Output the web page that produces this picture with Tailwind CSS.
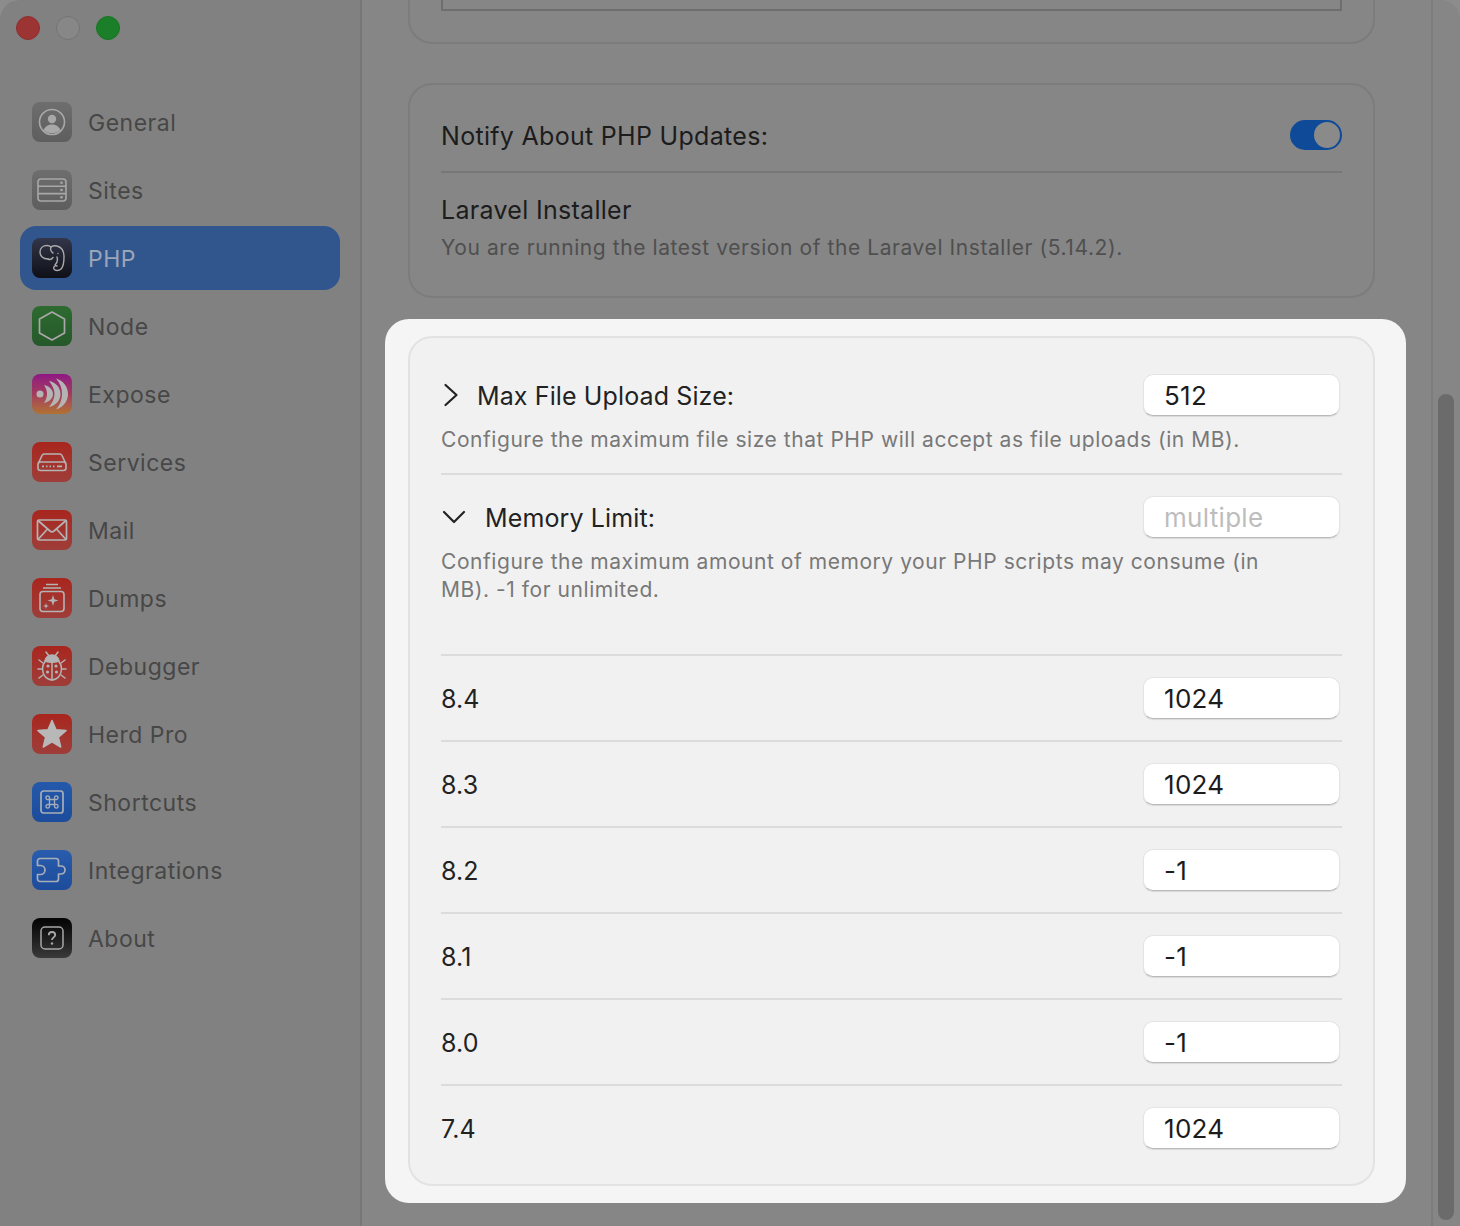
<!DOCTYPE html>
<html>
<head>
<meta charset="utf-8">
<script src="https://cdn.jsdelivr.net/npm/@tailwindcss/browser@4"></script>
</head>
<body class="m-0 bg-[#8c8c8c]">
<div class="relative w-[1460px] h-[1226px] overflow-hidden flex font-['Inter',sans-serif] bg-[#868686] rounded-tl-[20px] rounded-tr-[20px]">

    <!-- sidebar -->
    <aside class="w-[362px] h-full shrink-0 bg-[#818181] border-r-2 border-[#777777] px-5 rounded-tl-[20px]">
        <div class="flex items-center gap-[16px] h-[56px] -ml-1">
            <span class="w-6 h-6 rounded-full bg-[#9c3434] border border-[#8f3030]"></span>
            <span class="w-6 h-6 rounded-full bg-[#878787] border border-[#747474]"></span>
            <span class="w-6 h-6 rounded-full bg-[#1a7f28] border border-[#187424]"></span>
        </div>
        <nav class="mt-[34px] flex flex-col gap-1 text-[23px] tracking-[0.5px] text-[#474747]">
            <a class="h-16 flex items-center gap-4 pl-3 rounded-2xl">
                <span class="w-10 h-10 rounded-lg bg-gradient-to-b from-[#6e6e6e] to-[#5e5e5e] flex items-center justify-center">
                    <svg width="32" height="32" viewBox="0 0 32 32" fill="none" stroke="#a8a8a8" stroke-width="1.6"><circle cx="16" cy="16" r="12.5"/><circle cx="16" cy="13" r="4.2" fill="#a8a8a8" stroke="none"/><path d="M7.5 24c2-4 5-5.500 8.500-5.500s6.500 1.500 8.500 5.500a12.500 12.500 0 0 1-17 0z" fill="#a8a8a8" stroke="none"/></svg>
                </span>
                <span class="mt-[2px]">General</span>
            </a>
            <a class="h-16 flex items-center gap-4 pl-3 rounded-2xl">
                <span class="w-10 h-10 rounded-lg bg-gradient-to-b from-[#6e6e6e] to-[#5e5e5e] flex items-center justify-center">
                    <svg width="32" height="28" viewBox="0 0 32 28" fill="none" stroke="#a8a8a8" stroke-width="1.6"><rect x="2" y="3" width="28" height="22" rx="3"/><path d="M2 10.300h28M2 17.600h28"/><g fill="#a8a8a8" stroke="none"><circle cx="25.500" cy="6.700" r="1.300"/><circle cx="25.500" cy="14" r="1.300"/><circle cx="25.500" cy="21.300" r="1.300"/></g></svg>
                </span>
                <span class="mt-[2px]">Sites</span>
            </a>
            <a class="h-16 flex items-center gap-4 pl-3 rounded-2xl bg-[#31568e] text-[#9aa6b8]">
                <span class="w-10 h-10 rounded-lg bg-gradient-to-b from-[#33364a] to-[#0f1017] flex items-center justify-center">
                    <svg width="26" height="28" viewBox="0 0 26 28" fill="none" stroke="#a9a9a9" stroke-width="1.400" stroke-linecap="round" stroke-linejoin="round"><path d="M9 15C4 15 1 12 1 8 1 4 4 1.500 8 1.500c2 0 3 .5 4 1.500 2-1.500 4-1.500 6-1 4 1 7 5 7 11 0 5 0 9-3 12-2 2-6 2-7 0-1-2 1-4 3-3"/><path d="M12 3c-1 2 0 5 2 6M9 15c2 1 4 0 5-1.500M19 9.500v.1M18 13c1 3 0 6-2 8"/></svg>
                </span>
                <span class="mt-[2px]">PHP</span>
            </a>
            <a class="h-16 flex items-center gap-4 pl-3 rounded-2xl">
                <span class="w-10 h-10 rounded-lg bg-gradient-to-b from-[#2e6b30] to-[#25582a] flex items-center justify-center">
                    <svg width="30" height="32" viewBox="0 0 30 32" fill="none" stroke="#a8a8a8" stroke-width="1.700" stroke-linejoin="round"><path d="M15 2l12.500 7v14L15 30 2.500 23V9z"/></svg>
                </span>
                <span class="mt-[2px]">Node</span>
            </a>
            <a class="h-16 flex items-center gap-4 pl-3 rounded-2xl">
                <span class="w-10 h-10 rounded-lg bg-gradient-to-b from-[#8f1583] via-[#a33a5c] to-[#b0722f] flex items-center justify-center">
                    <svg width="34" height="34" viewBox="0 0 34 34" fill="#b4b4b4"><circle cx="5" cy="17" r="3.500"/><path d="M9 8C14 9 18 12.500 18 17 18 21.500 14 25 9 26 11 23 12 20 12 17 12 14 11 11 9 8z"/><path d="M14 4C20 5 25.500 10 25.500 17 25.500 24 20 29 14 30 17 26 19.500 22 19.500 17 19.500 12 17 8 14 4z"/><path d="M21 1.500C28 3.500 33 9.500 33 17 33 24.500 28 30.500 21 32.500 25 28 27 23 27 17 27 11 25 6 21 1.500z"/></svg>
                </span>
                <span class="mt-[2px]">Expose</span>
            </a>
            <a class="h-16 flex items-center gap-4 pl-3 rounded-2xl">
                <span class="w-10 h-10 rounded-lg bg-gradient-to-b from-[#a8251d] to-[#9e3d39] flex items-center justify-center">
                    <svg width="32" height="20" viewBox="0 0 32 20" fill="none" stroke="#b4b4b4" stroke-width="1.600" stroke-linejoin="round"><path d="M2.500 11L6 3.500C6.500 2.500 7.200 2 8.200 2h15.600c1 0 1.700.5 2.200 1.500L29.500 11"/><rect x="2" y="10" width="28" height="8.500" rx="2.500"/><path d="M6 14.300h2M10 14.300h1.500M13.500 14.300H15M17 14.300h1.500M21 14.300h5" stroke-width="1.800"/></svg>
                </span>
                <span class="mt-[2px]">Services</span>
            </a>
            <a class="h-16 flex items-center gap-4 pl-3 rounded-2xl">
                <span class="w-10 h-10 rounded-lg bg-gradient-to-b from-[#a8251d] to-[#9e3d39] flex items-center justify-center">
                    <svg width="32" height="24" viewBox="0 0 32 24" fill="none" stroke="#b4b4b4" stroke-width="1.700" stroke-linejoin="round"><rect x="1.500" y="2" width="29" height="20" rx="1.500"/><path d="M2 2.500l12 10.500c1.200 1 2.800 1 4 0L30 2.500M2 21.500l9.500-10.500M30 21.500L20.500 11"/></svg>
                </span>
                <span class="mt-[2px]">Mail</span>
            </a>
            <a class="h-16 flex items-center gap-4 pl-3 rounded-2xl">
                <span class="w-10 h-10 rounded-lg bg-gradient-to-b from-[#a8251d] to-[#9e3d39] flex items-center justify-center">
                    <svg width="28" height="30" viewBox="0 0 28 30" fill="none" stroke="#b4b4b4" stroke-width="1.600"><path d="M8 1.500h12M5 5h18"/><rect x="2" y="8.500" width="24" height="20" rx="3"/><path d="M15 12l1.300 4.200 4.200 1.300-4.200 1.300L15 23l-1.300-4.200-4.200-1.300 4.200-1.300z" fill="#b4b4b4" stroke="none"/><path d="M8 20l.7 2.300L11 23l-2.300.7L8 26l-.7-2.300L5 23l2.300-.7z" fill="#b4b4b4" stroke="none"/></svg>
                </span>
                <span class="mt-[2px]">Dumps</span>
            </a>
            <a class="h-16 flex items-center gap-4 pl-3 rounded-2xl">
                <span class="w-10 h-10 rounded-lg bg-gradient-to-b from-[#a8251d] to-[#9e3d39] flex items-center justify-center">
                    <svg width="32" height="34" viewBox="0 0 32 34" fill="none" stroke="#b4b4b4" stroke-width="1.500" stroke-linecap="round"><ellipse cx="16" cy="20" rx="9.500" ry="11"/><path d="M9 12c1-4 4-6 7-6s6 2 7 6c-4 1.500-10 1.500-14 0z" fill="#b4b4b4"/><path d="M16 13v18M10 3l3 4M22 3l-3 4M7 14l-4-3M25 14l4-3M6.500 20H2M25.500 20H30M7 26l-4 3M25 26l4 3"/><g fill="#b4b4b4" stroke="none"><circle cx="12" cy="17" r="1.600"/><circle cx="20" cy="17" r="1.600"/><circle cx="11.500" cy="23" r="1.600"/><circle cx="20.500" cy="23" r="1.600"/></g></svg>
                </span>
                <span class="mt-[2px]">Debugger</span>
            </a>
            <a class="h-16 flex items-center gap-4 pl-3 rounded-2xl">
                <span class="w-10 h-10 rounded-lg bg-gradient-to-b from-[#a8251d] to-[#9e3d39] flex items-center justify-center">
                    <svg width="32" height="32" viewBox="0 0 32 32" fill="#b8b8b8" stroke="#b8b8b8" stroke-width="1.500" stroke-linejoin="round"><path d="M16 2.500l4 9.200 10 .9-7.600 6.600 2.300 9.800L16 23.800l-8.700 5.200 2.300-9.800L2 12.600l10-.9z"/></svg>
                </span>
                <span class="mt-[2px]">Herd Pro</span>
            </a>
            <a class="h-16 flex items-center gap-4 pl-3 rounded-2xl">
                <span class="w-10 h-10 rounded-lg bg-gradient-to-b from-[#2459ab] to-[#1c4c9b] flex items-center justify-center">
                    <svg width="24" height="24" viewBox="0 0 24 24" fill="none" stroke="#a8aeb8" stroke-width="1.700"><rect x="1" y="1" width="22" height="22" rx="2.500"/><path d="M9.500 9.500h5v5h-5zM9.500 9.500H8a1.800 1.800 0 1 1 1.500-1.700zM14.500 9.500V8A1.800 1.800 0 1 1 16 9.500zM9.500 14.500V16A1.800 1.800 0 1 1 8 14.500zM14.500 14.500H16a1.800 1.800 0 1 1-1.500 1.700z" stroke-width="1.300"/></svg>
                </span>
                <span class="mt-[2px]">Shortcuts</span>
            </a>
            <a class="h-16 flex items-center gap-4 pl-3 rounded-2xl">
                <span class="w-10 h-10 rounded-lg bg-gradient-to-b from-[#2a5cad] to-[#1c4c9b] flex items-center justify-center">
                    <svg width="32" height="26" viewBox="0 0 32 26" fill="none" stroke="#a8aeb8" stroke-width="1.700" stroke-linejoin="round"><path d="M4 1.500h16a2.500 2.500 0 0 1 2.500 2.500v5h2.500a4 4 0 0 1 0 8h-2.500v5a2.500 2.500 0 0 1-2.500 2.500H4a2.500 2.500 0 0 1-2.500-2.500v-4.500h3a4.500 4.500 0 0 0 0-9h-3V4a2.500 2.500 0 0 1 2.500-2.500z"/></svg>
                </span>
                <span class="mt-[2px]">Integrations</span>
            </a>
            <a class="h-16 flex items-center gap-4 pl-3 rounded-2xl">
                <span class="w-10 h-10 rounded-lg bg-gradient-to-b from-[#050505] to-[#3a3a3a] flex items-center justify-center">
                    <svg width="24" height="24" viewBox="0 0 24 24" fill="none" stroke="#a8a8a8" stroke-width="1.500"><rect x="1" y="1" width="22" height="22" rx="4"/><path d="M8.800 9.200c0-2 1.400-3.200 3.200-3.200s3.200 1.200 3.200 2.900c0 2.400-3.200 2.500-3.200 5" stroke-width="1.800"/><circle cx="12" cy="17.500" r="1.200" fill="#a8a8a8" stroke="none"/></svg>
                </span>
                <span class="mt-[2px]">About</span>
            </a>
        </nav>
    </aside>

    <!-- main settings panel, dimmed behind the modal -->
    <main class="flex-1 pl-[46px]">
        <div class="w-[967px] h-[45px] -mt-px rounded-b-[24px] border-2 border-t-0 border-[#7c7c7c] px-[31px]">
            <div class="h-[12px] border-2 border-t-0 border-[#6e6e6e]"></div>
        </div>
        <section class="w-[967px] h-[215px] mt-[39px] rounded-[24px] border-2 border-[#7c7c7c] px-[31px] text-[25px] tracking-[0.3px] text-[#1c1c1c]">
            <div class="h-[88px] pt-[16px] flex items-center justify-between border-b-2 border-[#777777]">
                <span class="mt-[2px]">Notify About PHP Updates:</span>
                <span class="relative -mt-[2px] w-[52px] h-[30px] rounded-full bg-[#0f4a98]">
                    <span class="absolute right-[2px] top-[2px] w-[26px] h-[26px] rounded-full bg-[#8a8a8a]"></span>
                </span>
            </div>
            <div class="pt-[19px] leading-[36px]">Laravel Installer</div>
            <div class="text-[21px] leading-[28px] mt-[6px] tracking-[0.58px] text-[#4f4f4f]">You are running the latest version of the Laravel Installer (5.14.2).</div>
        </section>
    </main>

    <!-- scrollbar -->
    <div class="absolute top-0 right-0 bottom-0 w-[29px] border-l-2 border-[#7c7c7c]">
        <div class="absolute left-[5px] top-[394px] w-[16px] h-[826px] rounded-full bg-[#6b6b6b]"></div>
    </div>

    <!-- modal -->
    <div class="absolute left-[385px] top-[319px] w-[1021px] h-[884px] rounded-[24px] bg-[#f5f5f5] pl-[23px] pt-[17px] text-[#222222]">
        <div class="w-[967px] h-[850px] rounded-[24px] border-2 border-[#e2e2e2] bg-[#f1f1f1] px-[31px] text-[25px] tracking-[0.12px]">
            <div class="h-[137px] border-b-2 border-[#dcdcdc] pt-[36px]">
                <div class="flex items-center justify-between h-[42px]">
                    <div class="flex items-center">
                        <svg class="ml-[2px] w-[16px] h-[24px]" viewBox="0 0 16 24" fill="none" stroke="#222222" stroke-width="2.200" stroke-linecap="round" stroke-linejoin="round"><path d="M2.500 2l11 10-11 10"/></svg>
                        <span class="ml-[18px] mt-[4px]">Max File Upload Size:</span>
                    </div>
                    <div class="w-[197px] h-[42px] rounded-[10px] bg-white border border-[#e4e4e4] border-b-[#b9b9b9] shadow-[0_1px_1px_rgba(0,0,0,0.1)] pl-[20px] leading-[42px] text-[26px] tracking-[0.3px] text-[#1c1c1c] mr-[2px]">512</div>
                </div>
                <p class="mt-[10px] text-[21px] leading-[28px] tracking-[0.55px] text-[#787878]">Configure the maximum file size that PHP will accept as file uploads (in MB).</p>
            </div>
            <div class="h-[181px] border-b-2 border-[#dcdcdc] pt-[21px]">
                <div class="flex items-center justify-between h-[42px]">
                    <div class="flex items-center">
                        <svg class="ml-[1px] w-[24px] h-[16px]" viewBox="0 0 24 16" fill="none" stroke="#222222" stroke-width="2.200" stroke-linecap="round" stroke-linejoin="round"><path d="M2 3l10 10L22 3"/></svg>
                        <span class="ml-[19px] mt-[4px]">Memory Limit:</span>
                    </div>
                    <div class="w-[197px] h-[42px] rounded-[10px] bg-white border border-[#e4e4e4] border-b-[#b9b9b9] shadow-[0_1px_1px_rgba(0,0,0,0.1)] pl-[20px] leading-[42px] text-[26px] tracking-[0.3px] text-[#bdbdbd] mr-[2px]">multiple</div>
                </div>
                <p class="mt-[10px] w-[860px] text-[21px] leading-[28px] tracking-[0.55px] text-[#787878]">Configure the maximum amount of memory your PHP scripts may consume (in MB). -1 for unlimited.</p>
            </div>
            <div class="h-[86px] flex items-center justify-between border-b-2 border-[#dcdcdc]">
                <span class="mt-[4px]">8.4</span>
                <div class="w-[197px] h-[42px] rounded-[10px] bg-white border border-[#e4e4e4] border-b-[#b9b9b9] shadow-[0_1px_1px_rgba(0,0,0,0.1)] pl-[20px] leading-[42px] text-[26px] tracking-[0.3px] text-[#1c1c1c] mr-[2px]">1024</div>
            </div>
            <div class="h-[86px] flex items-center justify-between border-b-2 border-[#dcdcdc]">
                <span class="mt-[4px]">8.3</span>
                <div class="w-[197px] h-[42px] rounded-[10px] bg-white border border-[#e4e4e4] border-b-[#b9b9b9] shadow-[0_1px_1px_rgba(0,0,0,0.1)] pl-[20px] leading-[42px] text-[26px] tracking-[0.3px] text-[#1c1c1c] mr-[2px]">1024</div>
            </div>
            <div class="h-[86px] flex items-center justify-between border-b-2 border-[#dcdcdc]">
                <span class="mt-[4px]">8.2</span>
                <div class="w-[197px] h-[42px] rounded-[10px] bg-white border border-[#e4e4e4] border-b-[#b9b9b9] shadow-[0_1px_1px_rgba(0,0,0,0.1)] pl-[20px] leading-[42px] text-[26px] tracking-[0.3px] text-[#1c1c1c] mr-[2px]">-1</div>
            </div>
            <div class="h-[86px] flex items-center justify-between border-b-2 border-[#dcdcdc]">
                <span class="mt-[4px]">8.1</span>
                <div class="w-[197px] h-[42px] rounded-[10px] bg-white border border-[#e4e4e4] border-b-[#b9b9b9] shadow-[0_1px_1px_rgba(0,0,0,0.1)] pl-[20px] leading-[42px] text-[26px] tracking-[0.3px] text-[#1c1c1c] mr-[2px]">-1</div>
            </div>
            <div class="h-[86px] flex items-center justify-between border-b-2 border-[#dcdcdc]">
                <span class="mt-[4px]">8.0</span>
                <div class="w-[197px] h-[42px] rounded-[10px] bg-white border border-[#e4e4e4] border-b-[#b9b9b9] shadow-[0_1px_1px_rgba(0,0,0,0.1)] pl-[20px] leading-[42px] text-[26px] tracking-[0.3px] text-[#1c1c1c] mr-[2px]">-1</div>
            </div>
            <div class="h-[86px] pb-[2px] flex items-center justify-between">
                <span class="mt-[4px]">7.4</span>
                <div class="w-[197px] h-[42px] rounded-[10px] bg-white border border-[#e4e4e4] border-b-[#b9b9b9] shadow-[0_1px_1px_rgba(0,0,0,0.1)] pl-[20px] leading-[42px] text-[26px] tracking-[0.3px] text-[#1c1c1c] mr-[2px]">1024</div>
            </div>
        </div>
    </div>
</div>
</body>
</html>
